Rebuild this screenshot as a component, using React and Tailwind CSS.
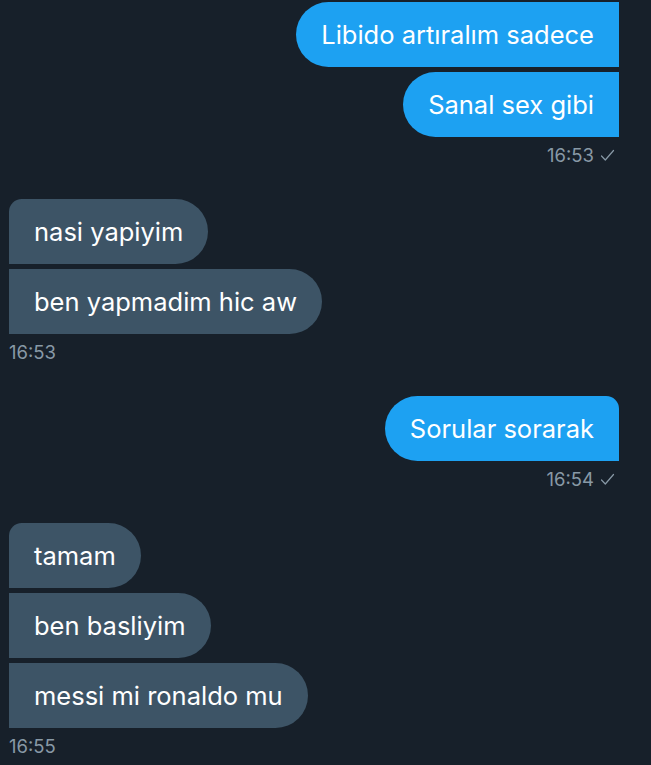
import React from 'react';

const groups = [
  { side: 'out', time: '16:53', msgs: ['Libido artıralım sadece', 'Sanal sex gibi'], cutTop: true },
  { side: 'in', time: '16:53', msgs: ['nasi yapiyim', 'ben yapmadim hic aw'] },
  { side: 'out', time: '16:54', msgs: ['Sorular sorarak'] },
  { side: 'in', time: '16:55', msgs: ['tamam', 'ben basliyim', 'messi mi ronaldo mu'] },
];

const Check = () => (
  <svg width="15" height="13" viewBox="0 0 15 13" fill="none" className="ml-[6px] mt-[1px]">
    <path d="M1.5 7 L5.3 11 L13.5 1.5" stroke="#8899a6" strokeWidth="1.2" strokeLinecap="round" strokeLinejoin="round" />
  </svg>
);

const Group = ({ side, time, msgs, cutTop }) => {
  const out = side === 'out';
  return (
    <div className={`flex flex-col ${out ? 'items-end pr-[32px]' : 'items-start pl-[9px]'} mb-[33px]`}>
      <div className={`flex flex-col gap-[5px] ${out ? 'items-end' : 'items-start'}`}>
        {msgs.map((m, i) => {
          let cls;
          if (out) {
            cls = i === 0 && !cutTop
              ? 'bg-[#1da1f2] rounded-l-[33px] rounded-tr-[13px] rounded-br-none'
              : 'bg-[#1da1f2] rounded-l-[33px] rounded-r-none';
          } else {
            cls = i === 0
              ? 'bg-[#3d5466] rounded-r-[33px] rounded-tl-[13px] rounded-bl-none'
              : 'bg-[#3d5466] rounded-r-[33px] rounded-l-none';
          }
          return (
            <div key={i} className={`${cls} h-[65px] flex items-center px-[25px] text-white text-[25.5px] leading-[30px] whitespace-nowrap`}>
              {m}
            </div>
          );
        })}
      </div>
      <div className={`mt-[7px] h-[22px] flex items-center text-[18.5px] leading-[22px] text-[#8899a6] ${out ? 'pr-[4px]' : ''}`}>
        <span>{time}</span>
        {out && <Check />}
      </div>
    </div>
  );
};

export default function App() {
  return (
    <div className="w-[651px] h-[765px] overflow-hidden bg-[#17202a] pt-[2px]" style={{ fontFamily: 'Inter, "Noto Sans", sans-serif' }}>
      {groups.map((g, i) => (
        <Group key={i} {...g} />
      ))}
    </div>
  );
}
